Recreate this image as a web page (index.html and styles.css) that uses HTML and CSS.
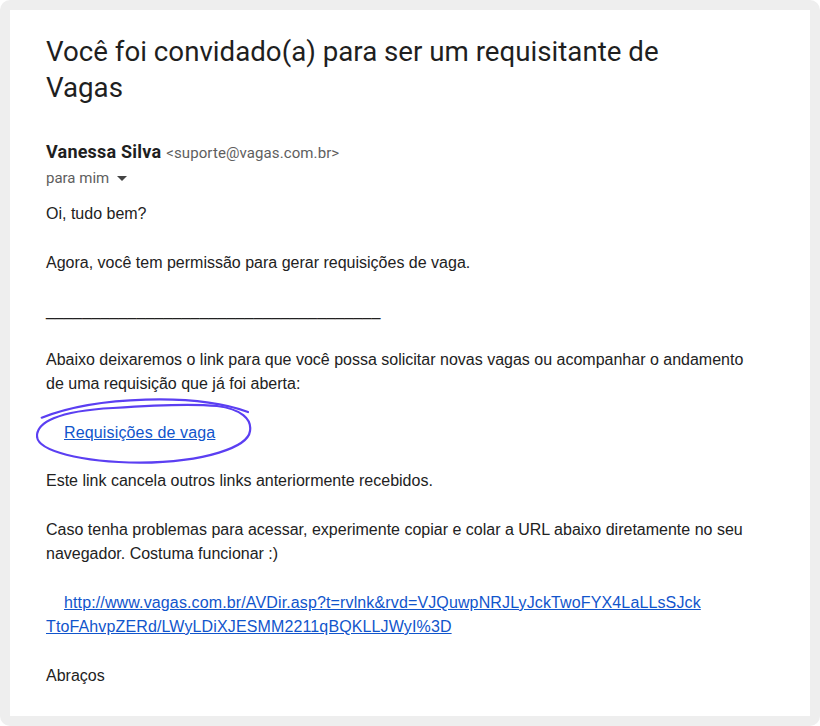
FILE: index.html
```html
<!DOCTYPE html>
<html lang="pt-BR">
<head>
<meta charset="utf-8">
<title>Você foi convidado(a) para ser um requisitante de Vagas</title>
<link rel="stylesheet" href="styles.css">
</head>
<body>
<div class="frame">
  <main class="mail">
    <h1 class="subject">Você foi convidado(a) para ser um requisitante de<br>Vagas</h1>
    <div class="sender">
      <span class="name">Vanessa Silva</span>
      <span class="addr">&lt;suporte@vagas.com.br&gt;</span>
    </div>
    <div class="to">para mim <span class="caret"></span></div>
    <div class="body">
      <p>Oi, tudo bem?</p>
      <p>Agora, você tem permissão para gerar requisições de vaga.</p>
      <p class="rule">_____________________________________</p>
      <p>Abaixo deixaremos o link para que você possa solicitar novas vagas ou acompanhar o andamento<br>de uma requisição que já foi aberta:</p>
      <p class="indent circled"><a class="req" href="#">Requisições de vaga</a>
        <svg class="scribble" width="230" height="80" viewBox="0 0 230 80" aria-hidden="true">
          <path d="M5.7 26.7 C 60 5, 160 2, 212 21" />
          <path d="M181 15 C 205 18, 216 28, 214 40 C 212 56, 170 71, 104 71.7 C 45 71, 1 60, 1 45 C 1 32, 20 20, 77 17 C 120 14, 160 13, 181 15" />
        </svg>
      </p>
      <p>Este link cancela outros links anteriormente recebidos.</p>
      <p>Caso tenha problemas para acessar, experimente copiar e colar a URL abaixo diretamente no seu navegador. Costuma funcionar :)</p>
      <p class="indent"><a class="url" href="#">http://www.vagas.com.br/AVDir.asp?t=rvlnk&amp;rvd=VJQuwpNRJLyJckTwoFYX4LaLLsSJck<br>TtoFAhvpZERd/LWyLDiXJESMM2211qBQKLLJWyI%3D</a></p>
      <p>Abraços</p>
    </div>
  </main>
</div>
</body>
</html>
```

FILE: styles.css
```css
html, body {
  margin: 0;
  padding: 0;
  background: #ffffff;
}

.frame {
  width: 820px;
  height: 726px;
  box-sizing: border-box;
  background: #eeeeee;
  border-radius: 10px;
  padding: 10px;
}

.mail {
  background: #ffffff;
  height: 100%;
  box-sizing: border-box;
  padding: 24px 20px 0 36px;
  overflow: hidden;
}

.subject {
  margin: 0;
  font-family: Roboto, "Noto Sans", sans-serif;
  font-weight: 400;
  font-size: 27.7px;
  line-height: 36px;
  color: #1f1f1f;
}

.sender {
  margin-top: 36px;
  font-family: Roboto, "Noto Sans", sans-serif;
  line-height: 20px;
  display: flex;
  align-items: baseline;
  gap: 5px;
}

.name {
  font-weight: 700;
  font-size: 18px;
  letter-spacing: 0.2px;
  color: #1f1f1f;
}

.addr {
  font-size: 15px;
  letter-spacing: 0.1px;
  color: #5e5e5e;
}

.to {
  margin-top: 5px;
  font-family: Roboto, "Noto Sans", sans-serif;
  font-size: 15px;
  line-height: 20px;
  color: #5e5e5e;
  display: flex;
  align-items: center;
  gap: 8px;
}

.caret {
  width: 0;
  height: 0;
  border-left: 5px solid transparent;
  border-right: 5px solid transparent;
  border-top: 5px solid #444444;
  margin-top: 1px;
}

.body {
  margin-top: 14px;
  font-family: Arial, "Liberation Sans", sans-serif;
  font-size: 16px;
  line-height: 24.3px;
  color: #222222;
}

.body p {
  margin: 0 0 24.3px 0;
}

.body a {
  color: #1155cc;
  text-decoration: underline;
}

.rule {
  letter-spacing: 0.14px;
}

.req {
  letter-spacing: 0.15px;
}

.url {
  letter-spacing: 0.13px;
}

.indent {
  text-indent: 18px;
}

.circled {
  position: relative;
}

.scribble {
  position: absolute;
  left: -10px;
  top: -30px;
  fill: none;
  stroke: #5b3ff2;
  stroke-width: 2.2;
  stroke-linecap: round;
  pointer-events: none;
}
```
